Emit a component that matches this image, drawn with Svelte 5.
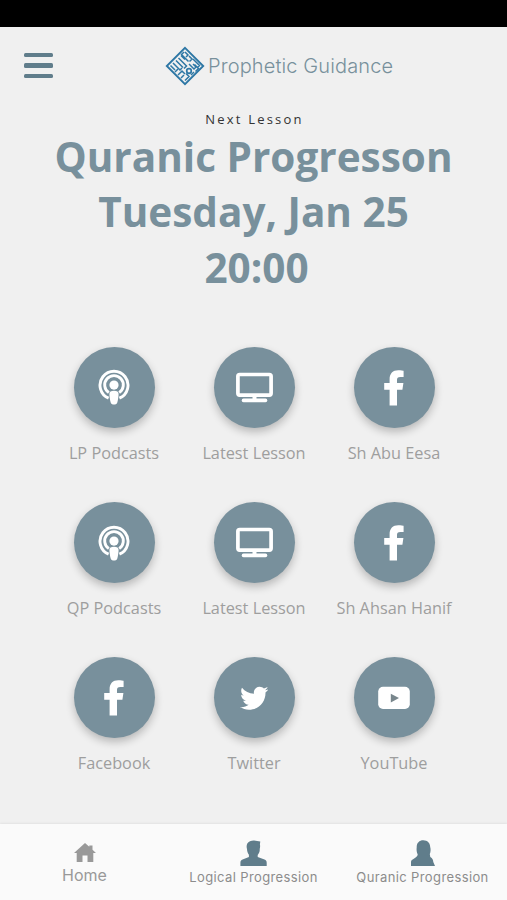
<script>
  const links = [
    { label: 'LP Podcasts', icon: 'podcast' },
    { label: 'Latest Lesson', icon: 'tv' },
    { label: 'Sh Abu Eesa', icon: 'facebook' },
    { label: 'QP Podcasts', icon: 'podcast' },
    { label: 'Latest Lesson', icon: 'tv' },
    { label: 'Sh Ahsan Hanif', icon: 'facebook' },
    { label: 'Facebook', icon: 'facebook' },
    { label: 'Twitter', icon: 'twitter' },
    { label: 'YouTube', icon: 'youtube' }
  ];
</script>

<div class="app">
  <div class="status-bar"></div>

  <header class="top-bar">
    <button class="menu" aria-label="Menu">
      <span></span>
      <span></span>
      <span></span>
    </button>
    <div class="brand">
      <svg class="logo" viewBox="0 0 40 40" fill="none" stroke="#2d77a5">
        <path d="M20 1.8L38.2 20 20 38.2 1.8 20z" stroke-width="1.9" />
        <g stroke-width="1.5">
          <path d="M5.500 19.500l4.500 4.500M8 17l7 7 2-2M11 14.500l7 7M13.500 12l8 8-2.500 2.500M16 9.500l4 4M19 6l-2.500 2.500 7 7M20 6l3 3-2 2" />
          <path d="M24 10l3 3-2.500 2.500M28 13l6.500 6.500-2 2-3-3M24 18l5 5 2-2-3-3M34 22l-3.500 3.500" />
          <path d="M10 26l3-3M13 29l4-4 3 3M16 32l3-3M20 34.500l4-4-3-3M26 29l3-3" />
        </g>
        <circle cx="24" cy="25" r="2.300" stroke-width="1.7" />
      </svg>
      <span class="brand-name">Prophetic Guidance</span>
    </div>
  </header>

  <section class="next">
    <p class="eyebrow">Next Lesson</p>
    <h1>Quranic Progresson<br />Tuesday, Jan 25<br /><span class="time">20:00</span></h1>
  </section>

  <main class="links">
    {#each links as item}
      <div class="link">
        <button class="circle" aria-label={item.label}>
          {#if item.icon === 'podcast'}
            <svg width="32" height="36" viewBox="0 0 32 36" fill="none" stroke="#fff" stroke-width="2.9">
              <path d="M10.600 29.200A14 14 0 1 1 21.400 29.200" />
              <path d="M10.800 23.600A9.300 9.300 0 1 1 21.200 23.600" />
              <circle cx="16" cy="16.100" r="4.600" fill="#fff" stroke="none" />
              <path d="M16 21.800c3 0 4.600.9 4.600 3.100 0 2.300-.7 6.400-1.300 8.700-.4 1.400-1.600 2-3.300 2s-2.900-.6-3.300-2c-.6-2.300-1.300-6.400-1.300-8.700 0-2.200 1.600-3.100 4.600-3.100z" fill="#fff" stroke="none" />
            </svg>
          {:else if item.icon === 'tv'}
            <svg width="37" height="31" viewBox="0 0 37 31" fill="none" stroke="#fff">
              <rect x="1.900" y="2.500" width="33.200" height="20.600" rx="1.800" stroke-width="3.700" />
              <path d="M18.500 23v5" stroke-width="4" />
              <path d="M7.500 28.400h22" stroke-width="3.600" stroke-linecap="round" />
            </svg>
          {:else if item.icon === 'facebook'}
            <svg class="fb" width="20" height="36" viewBox="0 0 20 36" fill="#fff">
              <path d="M5.600 35.500V19.700H.2v-6.800h5.400V9.400C5.600 3.500 8.900.3 14.200.3c2.500 0 5.400.5 5.400.5v6.200h-3.200c-2.700 0-3.400 1.300-3.400 3.100v2.800h6.400l-1 6.800H13v15.800z" />
            </svg>
          {:else if item.icon === 'twitter'}
            <svg width="28.400" height="28.400" viewBox="0 0 512 512" fill="#fff">
              <path d="M459.37 151.716c.325 4.548.325 9.097.325 13.645 0 138.72-105.583 298.558-298.558 298.558-59.452 0-114.68-17.219-161.137-47.106 8.447.974 16.568 1.299 25.34 1.299 49.055 0 94.213-16.568 130.274-44.832-46.132-.975-84.792-31.188-98.112-72.772 6.498.974 12.995 1.624 19.818 1.624 9.421 0 18.843-1.3 27.614-3.573-48.081-9.747-84.143-51.98-84.143-102.985v-1.299c13.969 7.797 30.214 12.67 47.431 13.319-28.264-18.843-46.781-51.005-46.781-87.391 0-19.492 5.197-37.36 14.294-52.954 51.655 63.675 129.3 105.258 216.365 109.807-1.624-7.797-2.599-15.918-2.599-24.04 0-57.828 46.782-104.934 104.934-104.934 30.213 0 57.502 12.67 76.67 33.137 23.715-4.548 46.456-13.32 66.599-25.34-7.798 24.366-24.366 44.833-46.132 57.827 21.117-2.273 41.584-8.122 60.426-16.243-14.292 20.791-32.161 39.308-52.628 54.253z" />
            </svg>
          {:else}
            <svg width="32" height="24" viewBox="0 0 32 24">
              <rect x=".2" y=".8" width="31.6" height="22.2" rx="4.8" fill="#fff" />
              <path d="M12.800 7.800l8.200 4.300-8.200 4.300z" fill="#78868c" />
            </svg>
          {/if}
        </button>
        <span class="label">{item.label}</span>
      </div>
    {/each}
  </main>

  <nav class="tabs">
    <div class="tab home">
      <svg width="22" height="19" viewBox="0 0 22 19" fill="#999">
        <path d="M11 0l4.300 3.800V2.500h3.200v4.200L22 10h-2.700v9h-5.800v-6.500h-5V19H2.700v-9H0z" />
      </svg>
      <span>Home</span>
    </div>
    <div class="tab">
      <svg width="27" height="26" viewBox="0 0 27 26" fill="#607d8b">
        <path d="M7.300 3.500C8.500 1.200 11.500.3 14 .4l6.300 1-.4 2.800c.4 1.900.2 3.300-.2 4.800.3 2.200-.6 4.500-2 5.900v2.200l6.800 2.500c1.500.6 2.200 1.600 2.200 3.200V26H.4v-3.200c0-1.600.7-2.600 2.200-3.200l6.300-2.500v-2.300C7.700 13 7 11 7 9c-.6-1.800-.5-3.800.3-5.500z" />
      </svg>
      <span>Logical Progression</span>
    </div>
    <div class="tab">
      <svg width="24" height="26" viewBox="0 0 24 26" fill="#607d8b">
        <path d="M5.700 7.200C5.700 3 8.300.3 12.300.3c4.200 0 6.800 2.800 6.900 6.700.7 2.300.5 5-.4 7l.5 3c2.200 1.200 2.900 2.900 3 5L24 26H0v-4.200c.2-1.600 1.200-2.200 2.800-3.100 2.200-1.200 3.700-2.400 3.900-4.200-1.100-2.200-1.300-4.900-1-7.300z" />
      </svg>
      <span>Quranic Progression</span>
    </div>
  </nav>
</div>

<style>
  :global(body) {
    margin: 0;
    background: #f0f0f0;
  }

  .app {
    display: flex;
    flex-direction: column;
    width: 507px;
    height: 900px;
    overflow: hidden;
    background: #f0f0f0;
    font-family: 'Open Sans', 'Noto Sans', sans-serif;
  }

  .status-bar {
    height: 27px;
    flex: none;
    background: #000;
  }

  button {
    border: 0;
    padding: 0;
    background: none;
  }

  .top-bar {
    display: flex;
    align-items: center;
    height: 77px;
    flex: none;
    padding-left: 24px;
  }

  .menu {
    display: flex;
    flex-direction: column;
    gap: 6px;
    width: 29px;
    margin-right: 112px;
  }

  .menu span {
    height: 4.4px;
    border-radius: 1.5px;
    background: #607d8b;
  }

  .brand {
    display: flex;
    align-items: center;
  }

  .logo {
    width: 40px;
    height: 40px;
    margin-right: 3px;
  }

  .brand-name {
    font-family: Inter, sans-serif;
    font-size: 20px;
    font-weight: 300;
    letter-spacing: 0.12px;
    color: #78909c;
    white-space: nowrap;
  }

  .next {
    text-align: center;
  }

  .eyebrow {
    margin: 6px 0 0;
    padding-left: 2px;
    font-size: 13px;
    line-height: 18px;
    letter-spacing: 2.2px;
    color: #333;
  }

  h1 {
    margin: 1px 0 0;
    font-size: 40.5px;
    line-height: 55.3px;
    font-weight: 700;
    color: #78909c;
  }

  .time {
    padding-left: 6px;
  }

  .links {
    display: grid;
    grid-template-columns: repeat(3, 140px);
    grid-auto-rows: 155.3px;
    justify-content: center;
    margin-top: 52px;
    padding-left: 1px;
    flex: 1;
  }

  .link {
    display: flex;
    flex-direction: column;
    align-items: center;
  }

  .circle {
    display: flex;
    align-items: center;
    justify-content: center;
    flex: none;
    width: 81px;
    height: 81px;
    border-radius: 50%;
    background: #78909c;
    box-shadow: 0 4px 8px rgba(0, 0, 0, 0.24);
  }

  .fb {
    margin-top: 1px;
  }

  .label {
    margin-top: 14px;
    font-size: 16.3px;
    line-height: 22px;
    color: #9e9e9e;
    white-space: nowrap;
  }

  .tabs {
    display: grid;
    grid-template-columns: repeat(3, 1fr);
    height: 76px;
    flex: none;
    background: #fafafa;
    box-shadow: 0 -1px 2px rgba(0, 0, 0, 0.06);
  }

  .tab {
    display: flex;
    flex-direction: column;
    align-items: center;
    padding-top: 16px;
    font-family: Inter, sans-serif;
    font-size: 13px;
    line-height: 18px;
    letter-spacing: 0.38px;
    color: #8c8c8c;
    white-space: nowrap;
  }

  .tab span {
    margin-top: 2px;
  }

  .home {
    padding-top: 19px;
    font-size: 16px;
    letter-spacing: 0;
    color: #999;
  }

  .home span {
    margin-top: 4px;
  }
</style>
